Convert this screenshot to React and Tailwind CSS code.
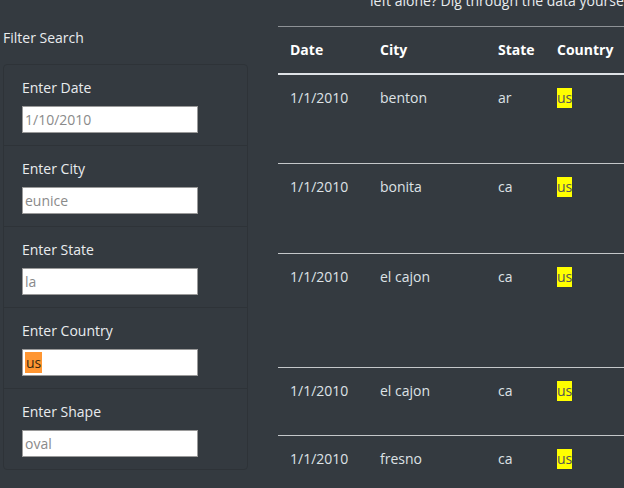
import React from "react";

const rows = [
  { date: "1/1/2010", city: "benton", state: "ar", h: "h-[90px]" },
  { date: "1/1/2010", city: "bonita", state: "ca", h: "h-[90px]" },
  { date: "1/1/2010", city: "el cajon", state: "ca", h: "h-[114px]" },
  { date: "1/1/2010", city: "el cajon", state: "ca", h: "h-[68px]" },
  { date: "1/1/2010", city: "fresno", state: "ca", h: "h-[68px]" },
];

const fields = [
  { label: "Enter Date", value: "1/10/2010" },
  { label: "Enter City", value: "eunice" },
  { label: "Enter State", value: "la" },
  { label: "Enter Country", value: "us", hl: true },
  { label: "Enter Shape", value: "oval" },
];

export default function App() {
  return (
    <div
      className="w-[624px] h-[488px] overflow-hidden bg-[#343a40] text-[#f1f3f5] flex"
      style={{ fontFamily: '"Open Sans", "Noto Sans", sans-serif' }}
    >
      <div className="w-[248px] shrink-0 pl-[3px] pt-[27px]">
        <div className="text-[14px] leading-[21px] text-[#e9ecef]">Filter Search</div>
        <ul className="mt-[16px] border border-[#2e3338] rounded-[4px]">
          {fields.map((f, i) => (
            <li
              key={f.label}
              className={
                "pl-[18px] pt-[12px] pb-[12px] " +
                (i > 0 ? "border-t border-[#2e3338]" : "")
              }
            >
              <div className="text-[14px] leading-[21px] text-[#e9ecef]">{f.label}</div>
              <div className="mt-[8px] w-[176px] h-[27px] bg-white border border-[#9a9a9a] flex items-center pl-[2px] text-[14px] text-[#8a8a8a]">
                {f.hl ? (
                  <span className="bg-[#ff9632] text-[#3a2a10] leading-[21px] px-[1px]">{f.value}</span>
                ) : (
                  <span>{f.value}</span>
                )}
              </div>
            </li>
          ))}
        </ul>
      </div>
      <div className="ml-[30px] flex-1 overflow-hidden">
        <div className="-mt-[10px] h-[21px] pl-[92px] whitespace-nowrap text-[14px] leading-[21px] text-[#e9ecef]">
          left alone? Dig through the data yourself and find out!
        </div>
        <table className="mt-[15px] table-fixed border-collapse w-[760px] text-[14px] leading-[21px]">
          <colgroup>
            <col className="w-[90px]" />
            <col className="w-[118px]" />
            <col className="w-[59px]" />
            <col className="w-[95px]" />
            <col className="w-[80px]" />
            <col />
          </colgroup>
          <thead>
            <tr className="h-[47px] border-t border-[#8e9296] border-b-2 border-b-[#dee2e6]">
              <th className="pl-[12px] text-left font-bold text-white">Date</th>
              <th className="pl-[12px] text-left font-bold text-white">City</th>
              <th className="pl-[12px] text-left font-bold text-white">State</th>
              <th className="pl-[12px] text-left font-bold text-white">Country</th>
              <th className="pl-[12px] text-left font-bold text-white">Shape</th>
              <th className="pl-[12px] text-left font-bold text-white">Comments</th>
            </tr>
          </thead>
          <tbody>
            {rows.map((r, i) => (
              <tr key={i} className={r.h + " border-t border-[#c4c7ca] align-top text-[#dee2e6]"}>
                <td className="pl-[12px] pt-[12px]">{r.date}</td>
                <td className="pl-[12px] pt-[12px]">{r.city}</td>
                <td className="pl-[12px] pt-[12px]">{r.state}</td>
                <td className="pl-[12px] pt-[12px]">
                  <span className="bg-[#ffff00] text-[#555] inline-block leading-[20px]">us</span>
                </td>
                <td className="pl-[12px] pt-[12px]"></td>
                <td className="pl-[12px] pt-[12px]"></td>
              </tr>
            ))}
          </tbody>
        </table>
      </div>
    </div>
  );
}
